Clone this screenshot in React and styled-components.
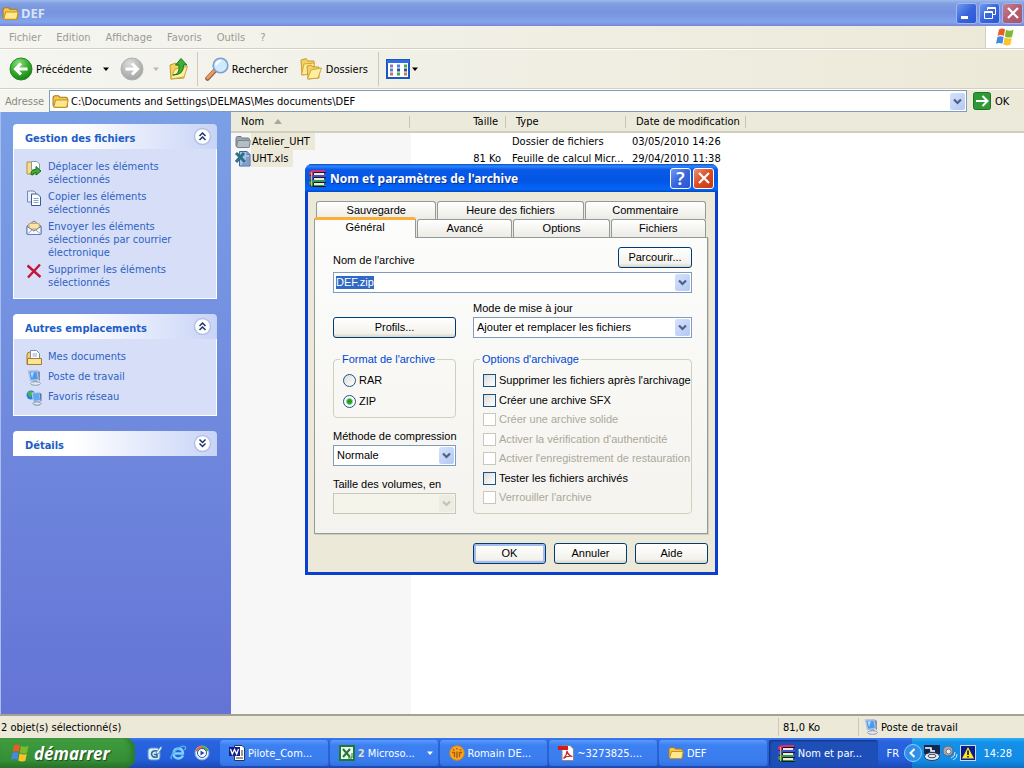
import React, { useEffect, useRef, useState } from 'react';
import styled, { createGlobalStyle, css } from 'styled-components';

const uiFont = `'DejaVu Sans Condensed', Tahoma, 'Noto Sans', sans-serif`;
const dialogFont = `'Liberation Sans', Arial, sans-serif`;
const titleFont = `'Noto Sans', 'Open Sans', sans-serif`;

const menuItems = ['Fichier', 'Edition', 'Affichage', 'Favoris', 'Outils', '?'];

const files = [
  {
    name: 'Atelier_UHT',
    size: '',
    type: 'Dossier de fichiers',
    date: '03/05/2010 14:26',
    icon: 'folder',
  },
  {
    name: 'UHT.xls',
    size: '81 Ko',
    type: 'Feuille de calcul Micr...',
    date: '29/04/2010 11:38',
    icon: 'sheet',
  },
];

const archiveOptions = [
  { label: "Supprimer les fichiers après l'archivage" },
  { label: 'Créer une archive SFX' },
  { label: 'Créer une archive solide', disabled: true },
  { label: "Activer la vérification d'authenticité", disabled: true },
  { label: "Activer l'enregistrement de restauration", disabled: true },
  { label: 'Tester les fichiers archivés' },
  { label: "Verrouiller l'archive", disabled: true },
];

/* ---------- Icons ---------- */

const FolderIcon = ({ size = 16, gray }) => (
  <svg width={size} height={size} viewBox="0 0 16 16">
    <path
      d="M1 4.5Q1 2.5 3 2.5H6L7.5 4H13Q14.5 4 14.5 5.5V13H2.5Q1 13 1 11.5Z"
      fill={gray ? '#9aa5ae' : '#f3c84b'}
      stroke={gray ? '#6d7982' : '#a8791c'}
    />
    <path
      d={
        gray
          ? 'M2.5 6.5H15.2L14.5 12.5Q14.4 13.5 13.3 13.5H3Q1.8 13.5 1.8 12.3Z'
          : 'M3.5 6.5H15.2L14 12.5Q13.8 13.5 12.8 13.5H2.5Q1.5 13.5 1.8 12.3Z'
      }
      fill={gray ? '#b4bdc3' : '#ffe88e'}
      stroke={gray ? '#78848c' : '#c4932a'}
    />
  </svg>
);

const SheetIcon = () => (
  <svg width="16" height="16" viewBox="0 0 16 16">
    <path d="M4.5 .5H12L15 3.5V15H4.5Z" fill="#a9c0e2" stroke="#3f649f" />
    <path d="M12 .5V3.5H15M11 7H14M11 9H14M11 11H14M7 13H14" fill="none" stroke="#5b7fb5" />
    <path d="M1 2L10 11M9 2L1 11" stroke="#2c7286" strokeWidth="3" />
  </svg>
);

const BackIcon = ({ disabled }) => (
  <svg width="24" height="24" viewBox="0 0 24 24">
    <defs>
      <radialGradient id={disabled ? 'navOff' : 'navOn'} cx="0.4" cy="0.25" r="0.8">
        <stop offset="0" stopColor={disabled ? '#dcdcdc' : '#8be07d'} />
        <stop offset="0.55" stopColor={disabled ? '#b9b9b9' : '#36ab2c'} />
        <stop offset="1" stopColor={disabled ? '#a2a2a2' : '#167c16'} />
      </radialGradient>
    </defs>
    <circle
      cx="12"
      cy="12"
      r="11"
      fill={`url(#${disabled ? 'navOff' : 'navOn'})`}
      stroke={disabled ? '#b0b0b0' : '#278a25'}
    />
    <path
      d={disabled ? 'M5.5 12H17M12 6.5L17.5 12L12 17.5' : 'M18.5 12H7M12 6.5L6.5 12L12 17.5'}
      fill="none"
      stroke="#fff"
      strokeWidth="3"
    />
  </svg>
);

const UpFolderIcon = () => (
  <svg width="22" height="24" viewBox="0 0 22 24">
    <path d="M2 8L8 6L10 9H16V21L3 22Z" fill="#f4d261" stroke="#c39a32" />
    <path d="M2.5 22L7 12L19.5 9.5L16 20Z" fill="#ffef9e" stroke="#d0a63c" />
    <path
      d="M5 18Q12 18 11 8H7.5L13 1.5L19 8H15.5Q16 18 5 18Z"
      fill="#3fae35"
      stroke="#1c7a1c"
    />
  </svg>
);

const SearchIcon = () => (
  <svg width="24" height="24" viewBox="0 0 24 24">
    <path d="M2.5 21.5L9.5 14" stroke="#9a5f3b" strokeWidth="4.6" strokeLinecap="round" />
    <path d="M2.5 21L9 14" stroke="#e79a68" strokeWidth="2.6" strokeLinecap="round" />
    <circle cx="15.5" cy="8.5" r="7.3" fill="#cfeafd" stroke="#7b9fd2" strokeWidth="1.6" />
    <path d="M11 8Q12 4.2 16 4" fill="none" stroke="#fff" strokeWidth="2" />
  </svg>
);

const FoldersIcon = () => (
  <svg width="24" height="24" viewBox="0 0 24 24">
    <path d="M2 3L7 1.5L9 4H15V16L3 18Z" fill="#f4d060" stroke="#c99c31" />
    <path d="M2.5 18L5 7L15.5 6L13 17Z" fill="#ffeb96" stroke="#d2a740" />
    <path d="M8 9L12 8L14 10H20V21L9 22Z" fill="#f4d060" stroke="#c99c31" />
    <path d="M8.5 22L12 13L22.5 11L19 21Z" fill="#ffef9f" stroke="#d2a740" />
  </svg>
);

const ViewsIcon = () => (
  <svg width="24" height="20" viewBox="0 0 24 20">
    <rect x="1" y="1" width="22" height="18" fill="#fff" stroke="#1c55c4" strokeWidth="2" />
    <rect x="1" y="1" width="22" height="3" fill="#2e6ee0" />
    <path d="M4 7H7" stroke="#8d7aa8" strokeWidth="3" />
    <path d="M11 7H14M4 11H7" stroke="#4b83d9" strokeWidth="3" />
    <path d="M18 7H21M11 15H14" stroke="#4da54a" strokeWidth="3" />
    <path d="M4 15H7M18 15H21" stroke="#c07a5c" strokeWidth="3" />
    <path d="M11 11H14M18 11H21" stroke="#2f4f8e" strokeWidth="3" />
  </svg>
);

const FlagIcon = ({ size = 20 }) => (
  <svg width={size} height={size} viewBox="0 0 20 20">
    <path d="M4 2.5Q7 .5 10 2.3L8.8 9Q5.8 7.2 2.6 9Z" fill="#ee5a26" />
    <path d="M11 2.8Q14.5 4.6 18.5 2.8L17 10Q13.5 11.4 9.8 9.4Z" fill="#7dbb2e" />
    <path d="M2.4 10Q5.5 8.3 8.6 10L7.4 16.8Q4.2 15 1 16.8Z" fill="#4488e4" />
    <path d="M9.6 10.5Q13 12.4 16.8 11L15.4 17.8Q12 19.4 8.3 17.4Z" fill="#fcc32c" />
  </svg>
);

const GoIcon = () => (
  <svg width="18" height="18" viewBox="0 0 18 18">
    <rect x=".5" y=".5" width="17" height="17" rx="2" fill="#2f9a35" stroke="#1d7424" />
    <path d="M3 9H14M9.5 4L14.5 9L9.5 14" fill="none" stroke="#fff" strokeWidth="2" />
  </svg>
);

const MoveIcon = () => (
  <svg width="16" height="16" viewBox="0 0 16 16">
    <path d="M1 2H6L7 3.5H12V14H1Z" fill="#f6dd86" stroke="#b5923f" />
    <path d="M5.5 1.5H11L13.5 4V10H5.5Z" fill="#fff" stroke="#8c98b8" />
    <path d="M5 14.5Q4.5 9.5 10 9.5V6.5L15 11L10 15V12.5Q7 12.2 7 15Z" fill="#3fae3a" stroke="#176f1a" />
  </svg>
);

const CopyIcon = () => (
  <svg width="16" height="16" viewBox="0 0 16 16">
    <path d="M1.5 1H8L10 3V12H1.5Z" fill="#e8effb" stroke="#7189b8" />
    <path d="M5.5 4H11.5L14.5 7V15.5H5.5Z" fill="#fff" stroke="#3c5a92" />
    <path d="M7.5 8.5H12.5M7.5 10.5H12.5M7.5 12.5H12.5" stroke="#7fa3d6" />
  </svg>
);

const MailIcon = () => (
  <svg width="16" height="16" viewBox="0 0 16 16">
    <path d="M1 6L8 1L15 6V14H1Z" fill="#bcd3f2" stroke="#6a7fa8" />
    <path d="M3 3.5H13V9H3Z" fill="#ffe3a6" stroke="#d9a652" />
    <path d="M1 6.5L8 11L15 6.5V14.5H1Z" fill="#f5f9ff" stroke="#6a7fa8" />
    <path d="M1 14.5L6 10M15 14.5L10 10" stroke="#8da3c9" />
  </svg>
);

const DeleteIcon = () => (
  <svg width="16" height="16" viewBox="0 0 16 16">
    <path d="M1.5 2.5L14.5 14M14 1.5L2 14.5" stroke="#c4143a" strokeWidth="2.4" />
  </svg>
);

const DocumentsIcon = () => (
  <svg width="16" height="16" viewBox="0 0 16 16">
    <path d="M1 5Q1 2 4 2H6V14.5H1Z" fill="#f2cf6a" stroke="#a87d27" />
    <path d="M4.5 .5H10.5L13.5 3.5V11H4.5Z" fill="#fff" stroke="#7b8fb5" />
    <path d="M6.5 4H11M6.5 6H11" stroke="#8fa9d6" />
    <path d="M1.500 8.500H15.500V14.500H1.500Z" fill="#fbe594" stroke="#a87d27" />
  </svg>
);

const ComputerIcon = () => (
  <svg width="16" height="16" viewBox="0 0 16 16">
    <path d="M2.500 1L11 .7L12.500 9.500L4.500 10.500Z" fill="#4a9bf0" stroke="#b3c2dc" strokeWidth="1.400" />
    <path d="M4.500 2.500L8 2.300L6 8Z" fill="#b5dcff" />
    <path d="M11.500 .5L14 2V11L12.800 10Z" fill="#7d90b8" />
    <path d="M7 10.500L11 10L11.500 13H8Z" fill="#9dabc6" />
    <ellipse cx="9.500" cy="13.500" rx="5" ry="1.800" fill="#e6e9f0" stroke="#8c99b5" />
  </svg>
);

const NetworkIcon = () => (
  <svg width="16" height="16" viewBox="0 0 16 16">
    <circle cx="5" cy="5" r="4.5" fill="#2f7fd8" />
    <path d="M2 2Q5 0 7 3Q5 4 5 7Q2 7 2 2Z" fill="#4cb748" />
    <path d="M6 3L13.500 2.500L14.500 10.500L7.500 11.500Z" fill="#5ca9f5" stroke="#c2cfe3" />
    <path d="M13.500 2.500L15.500 4V11.500L14.500 11Z" fill="#5a6f9b" />
    <ellipse cx="11" cy="13.500" rx="4" ry="1.700" fill="#e6e9f0" stroke="#7c8baa" />
  </svg>
);

// pile of three books
const ArchiveIcon = () => (
  <svg width="17" height="17" viewBox="0 0 17 17">
    {[
      ['#d0307f', 0],
      ['#3f55c9', 5],
      ['#2c9c57', 10],
    ].map(([color, y]) => (
      <g key={color} transform={`translate(0 ${y})`}>
        <path d="M1 1L4 0H16V2L5 3Z" fill={color} />
        <path d="M0 2L1 1L5 3V7L0 5Z" fill={color} />
        <path d="M5 2H17V3H5Z" fill="#20131c" />
        <path d="M5 3H15V5H5Z" fill="#efe9dc" />
        <path d="M5 5H17V6H5Z" fill={color} />
        <path d="M4.5 2.500V6.500L.5 5" fill="none" stroke="#20131c" strokeWidth=".8" />
      </g>
    ))}
    <path d="M2.500 2V16" stroke="#d9b94a" />
    <path d="M4 16.500H17" stroke="#20131c" />
  </svg>
);

const Chevron = ({ color = '#4d6185' }) => (
  <svg width="9" height="7" viewBox="0 0 9 7">
    <path d="M1 1.5L4.5 5L8 1.5" fill="none" stroke={color} strokeWidth="2.2" />
  </svg>
);

const DoubleChevron = ({ down }) => (
  <svg width="19" height="19" viewBox="0 0 19 19">
    <circle cx="9.5" cy="9.5" r="8" fill="#fff" stroke="#b3bfe4" strokeWidth="1.4" />
    <path
      d={
        down
          ? 'M6.5 5.5L9.5 8.5L12.5 5.5M6.5 9.5L9.5 12.5L12.5 9.5'
          : 'M6.5 9L9.5 6L12.5 9M6.5 13L9.5 10L12.5 13'
      }
      fill="none"
      stroke="#1d3470"
      strokeWidth="1.5"
    />
  </svg>
);

const SmallArrow = ({ color = '#000', up }) => (
  <svg width="8" height="5" viewBox="0 0 8 5">
    <path d={up ? 'M0 5L4 0L8 5Z' : 'M1 0.5H7L4 4Z'} fill={color} />
  </svg>
);

const QuickDesktopIcon = () => (
  <svg width="16" height="16" viewBox="0 0 16 16">
    <rect x="1" y="3" width="12" height="12" rx="3" fill="#d8ecfa" stroke="#5f92c8" />
    <path d="M10 6Q5 5 4.5 9Q5 13 10 12V9.5H7" fill="none" stroke="#256b9c" strokeWidth="1.6" />
    <path d="M9 8L14 1L15 3L11 9Z" fill="#fff" stroke="#3f77b4" strokeWidth=".8" />
  </svg>
);

const BrowserIcon = () => (
  <svg width="17" height="16" viewBox="0 0 17 16">
    <path d="M13 10.5Q11.5 13.5 8 13.5Q3.5 13 3.5 8.5Q4 3.5 8.5 3.5Q13 4 13 8.5H5" fill="none" stroke="#7fd0fb" strokeWidth="2.4" />
    <path d="M2 14Q-1 13 5 6Q12 0 15 1.5Q16.5 2.5 14.5 5" fill="none" stroke="#56b4ee" strokeWidth="1.3" />
  </svg>
);

const PlayerIcon = () => (
  <svg width="16" height="16" viewBox="0 0 16 16">
    <circle cx="8" cy="8" r="7" fill="#e9f1fb" stroke="#87a6d8" />
    <path d="M1.5 6Q3 1 8 1V4.5Q5 4.5 4.5 7Z" fill="#e8702e" />
    <path d="M8 1Q13 1.5 14.5 6L11 7Q10 4.5 8 4.5Z" fill="#58a83d" />
    <circle cx="8" cy="8" r="4.5" fill="#fff" stroke="#2a52a8" />
    <path d="M6.5 5.5L10.5 8L6.5 10.5Z" fill="#1f4cae" />
  </svg>
);

const WordIcon = () => (
  <svg width="16" height="16" viewBox="0 0 16 16">
    <path d="M5.5 .5H13L15.5 3V15.5H5.5Z" fill="#fff" stroke="#26345e" />
    <path d="M12 6H14M12 8H14M12 10H14M7 13H14" stroke="#333" />
    <rect x="0" y="2" width="11" height="9" fill="#14208c" />
    <path d="M1.5 4L3.3 9L5.5 4.5L7.7 9L9.5 4" fill="none" stroke="#fff" strokeWidth="1.3" />
  </svg>
);

const ExcelIcon = () => (
  <svg width="16" height="16" viewBox="0 0 16 16">
    <rect x="1" y="1" width="14" height="14" fill="#f1f7ee" stroke="#1d7a35" strokeWidth="2" />
    <path d="M4 4L11 12M11 4L4 12" stroke="#1d7a35" strokeWidth="2" />
    <path d="M13 8V13M9 13H13" stroke="#1d7a35" />
  </svg>
);

const ContactIcon = () => (
  <svg width="16" height="16" viewBox="0 0 16 16">
    <circle cx="8" cy="8" r="7.3" fill="#f9a526" stroke="#d9820f" />
    <path d="M4.5 4V5.500M8 3V4.500M11.500 4V5.500" stroke="#a85a08" strokeWidth="1.400" />
    <path d="M3 7.500H5.500V12M8 6.500V13M13 7.500H10.500V12" fill="none" stroke="#a85a08" strokeWidth="1.400" />
  </svg>
);

const PdfIcon = () => (
  <svg width="16" height="16" viewBox="0 0 16 16">
    <path d="M4 .5H12L15.5 4V15.5H4Z" fill="#fff" stroke="#8a8a8a" />
    <rect x="0" y="1" width="10" height="4" fill="#d01c1c" />
    <path d="M5.5 13.5Q9 10 9 6Q10 10.5 14.5 11.5Q9 10.5 5.5 13.5Z" fill="none" stroke="#c9252a" strokeWidth="1.2" />
  </svg>
);

const TrayDeviceIcon = () => (
  <svg width="16" height="16" viewBox="0 0 16 16">
    <rect width="16" height="9" fill="#10264f" />
    <path d="M1 3H7V6H11" fill="none" stroke="#fff" strokeWidth="1.6" />
    <ellipse cx="8" cy="11.5" rx="7.5" ry="4" fill="#e6eaf0" stroke="#2b3b5c" />
    <ellipse cx="8" cy="11" rx="4" ry="1.8" fill="none" stroke="#3d4b66" />
  </svg>
);

const SpeakerIcon = () => (
  <svg width="16" height="16" viewBox="0 0 16 16">
    <circle cx="6" cy="6" r="5" fill="#a7acb4" stroke="#5f666f" />
    <circle cx="6.5" cy="6.5" r="2.5" fill="#e8ebef" stroke="#6d7580" />
    <path d="M9 13Q13 12 13 7M11 15Q15.5 13 15 9" fill="none" stroke="#d7e3f0" />
  </svg>
);

const WarningIcon = () => (
  <svg width="16" height="16" viewBox="0 0 16 16">
    <rect x=".5" y=".5" width="15" height="15" fill="#0b1c8e" stroke="#cfd8f2" />
    <path d="M8 2L14 13.5H2Z" fill="#ffe81f" />
    <path d="M8 5.5V10M8 11V12.6" stroke="#111" strokeWidth="1.6" />
  </svg>
);

const CloseCross = () => (
  <svg width="20" height="20" viewBox="0 0 20 20">
    <path d="M5 5L15 15M15 5L5 15" stroke="#fff" strokeWidth="2.2" />
  </svg>
);

const tasks = [
  { label: 'Pilote_Com...', icon: <WordIcon /> },
  { label: 'Microso...', icon: <ExcelIcon />, count: 2 },
  { label: 'Romain DE...', icon: <ContactIcon /> },
  { label: '~3273825....', icon: <PdfIcon /> },
  { label: 'DEF', icon: <FolderIcon /> },
  { label: 'Nom et par...', icon: <ArchiveIcon />, active: true },
];

const sidePanels = [
  {
    title: 'Gestion des fichiers',
    links: [
      { label: 'Déplacer les éléments sélectionnés', icon: <MoveIcon /> },
      { label: 'Copier les éléments sélectionnés', icon: <CopyIcon /> },
      {
        label: 'Envoyer les éléments sélectionnés par courrier électronique',
        icon: <MailIcon />,
      },
      { label: 'Supprimer les éléments sélectionnés', icon: <DeleteIcon /> },
    ],
  },
  {
    title: 'Autres emplacements',
    links: [
      { label: 'Mes documents', icon: <DocumentsIcon /> },
      { label: 'Poste de travail', icon: <ComputerIcon /> },
      { label: 'Favoris réseau', icon: <NetworkIcon /> },
    ],
  },
  { title: 'Détails', links: null },
];

/* ---------- Explorer window ---------- */

const Explorer = () => (
  <ExplorerWindow>
    <TitleBar>
      <FolderIcon size={17} />
      <WindowTitle>DEF</WindowTitle>
      <CaptionButton aria-label="Réduire">
        <svg width="20" height="20" viewBox="0 0 20 20">
          <path d="M4 14.5H11" stroke="#fff" strokeWidth="3" />
        </svg>
      </CaptionButton>
      <CaptionButton aria-label="Restaurer">
        <svg width="20" height="20" viewBox="0 0 20 20">
          <path d="M7.5 7V4.5H15.5V11.5H13M7.5 5.5H15.5" fill="none" stroke="#fff" />
          <path d="M4.5 8.5H12.5V15.5H4.5ZM4.5 9.5H12.5" fill="none" stroke="#fff" />
        </svg>
      </CaptionButton>
      <CaptionButton aria-label="Fermer" $close>
        <CloseCross />
      </CaptionButton>
    </TitleBar>

    <MenuBar>
      {menuItems.map((item) => (
        <MenuButton key={item}>{item}</MenuButton>
      ))}
      <FlagBox>
        <FlagIcon />
      </FlagBox>
    </MenuBar>

    <ToolBar>
      <ToolButton>
        <BackIcon />
        Précédente
      </ToolButton>
      <ArrowButton aria-label="Historique précédent">
        <SmallArrow />
      </ArrowButton>
      <ToolButton aria-label="Suivante" disabled>
        <BackIcon disabled />
      </ToolButton>
      <ArrowButton aria-label="Historique suivant" disabled>
        <SmallArrow color="#b9b9ae" />
      </ArrowButton>
      <ToolButton aria-label="Dossier parent">
        <UpFolderIcon />
      </ToolButton>
      <ToolDivider />
      <ToolButton>
        <SearchIcon />
        Rechercher
      </ToolButton>
      <ToolButton $wide>
        <FoldersIcon />
        Dossiers
      </ToolButton>
      <ToolDivider />
      <ToolButton aria-label="Affichages" $tight>
        <ViewsIcon />
        <SmallArrow />
      </ToolButton>
    </ToolBar>

    <AddressBar>
      <AddressLabel htmlFor="address">Adresse</AddressLabel>
      <AddressField>
        <FolderIcon size={17} />
        <AddressInput
          id="address"
          defaultValue="C:\Documents and Settings\DELMAS\Mes documents\DEF"
        />
        <DropButton aria-label="Adresses récentes">
          <Chevron />
        </DropButton>
      </AddressField>
      <GoButton>
        <GoIcon />
        OK
      </GoButton>
    </AddressBar>

    <ExplorerBody>
      <Sidebar>
        {sidePanels.map((panel) => (
          <section key={panel.title}>
            <PanelHeader>
              <PanelTitle>{panel.title}</PanelTitle>
              <PanelToggle aria-label={panel.title}>
                <DoubleChevron down={!panel.links} />
              </PanelToggle>
            </PanelHeader>
            {panel.links && (
              <PanelBody>
                {panel.links.map((link) => (
                  <PanelLink key={link.label} href="#">
                    {link.icon}
                    <span>{link.label}</span>
                  </PanelLink>
                ))}
              </PanelBody>
            )}
          </section>
        ))}
      </Sidebar>

      <FileArea>
        <FileTable>
          <colgroup>
            <col width="179" />
            <col width="96" />
            <col width="120" />
            <col width="120" />
            <col />
          </colgroup>
          <thead>
            <tr>
              <HeadCell>
                <SortLabel>
                  Nom <SmallArrow up color="#aca899" />
                </SortLabel>
              </HeadCell>
              <HeadCell $right>Taille</HeadCell>
              <HeadCell>Type</HeadCell>
              <HeadCell>Date de modification</HeadCell>
              <HeadCell $last />
            </tr>
          </thead>
          <tbody>
            {files.map((file) => (
              <tr key={file.name}>
                <FileCell $first>
                  <FileName>
                    {file.icon === 'folder' ? <FolderIcon gray /> : <SheetIcon />}
                    <span>{file.name}</span>
                  </FileName>
                </FileCell>
                <FileCell $right>{file.size}</FileCell>
                <FileCell>{file.type}</FileCell>
                <FileCell>{file.date}</FileCell>
                <td />
              </tr>
            ))}
          </tbody>
        </FileTable>
      </FileArea>
    </ExplorerBody>

    <StatusBar>
      <StatusText>2 objet(s) sélectionné(s)</StatusText>
      <StatusCell $width="80px">81,0 Ko</StatusCell>
      <StatusCell $width="166px">
        <ComputerIcon />
        Poste de travail
      </StatusCell>
    </StatusBar>
  </ExplorerWindow>
);

/* ---------- Archive dialog ---------- */

const ArchiveDialog = () => {
  const nameRef = useRef(null);
  const [format, setFormat] = useState('ZIP');

  useEffect(() => {
    nameRef.current.focus();
    nameRef.current.select();
  }, []);

  return (
    <DialogWindow role="dialog" aria-labelledby="dialogTitle">
      <DialogTitleBar>
        <ArchiveIcon />
        <DialogTitle id="dialogTitle">Nom et paramètres de l'archive</DialogTitle>
        <CaptionButton aria-label="Aide contextuelle" $bright>
          ?
        </CaptionButton>
        <CaptionButton aria-label="Fermer" $bright $close>
          <CloseCross />
        </CaptionButton>
      </DialogTitleBar>

      <DialogBody>
        <TabList role="tablist">
          <TabRow>
            <Tab role="tab" $grow={120}>Sauvegarde</Tab>
            <Tab role="tab" $grow={146}>Heure des fichiers</Tab>
            <Tab role="tab" $grow={121}>Commentaire</Tab>
          </TabRow>
          <TabRow>
            <Tab role="tab" aria-selected="true" $grow={102} $active>Général</Tab>
            <Tab role="tab" $grow={95}>Avancé</Tab>
            <Tab role="tab" $grow={96}>Options</Tab>
            <Tab role="tab" $grow={95}>Fichiers</Tab>
          </TabRow>
        </TabList>

        <TabPanel role="tabpanel">
          <NameRow>
            <label htmlFor="archiveName">Nom de l'archive</label>
            <PushButton $width="74px">Parcourir...</PushButton>
          </NameRow>
          <ComboBox>
            <ComboInput id="archiveName" ref={nameRef} defaultValue="DEF.zip" />
            <DropButton aria-label="Noms récents">
              <Chevron />
            </DropButton>
          </ComboBox>

          <SettingsGrid>
            <ProfileCell>
              <PushButton $width="100%">Profils...</PushButton>
            </ProfileCell>
            <Field>
              <label htmlFor="updateMode">Mode de mise à jour</label>
              <SelectBox>
                <Select id="updateMode">
                  <option>Ajouter et remplacer les fichiers</option>
                </Select>
                <SelectArrow>
                  <Chevron />
                </SelectArrow>
              </SelectBox>
            </Field>

            <LeftColumn>
              <Group>
                <legend>Format de l'archive</legend>
                <RadioList>
                  {['RAR', 'ZIP'].map((value) => (
                    <OptionLabel key={value}>
                      <Radio
                        type="radio"
                        name="format"
                        checked={format === value}
                        onChange={() => setFormat(value)}
                      />
                      {value}
                    </OptionLabel>
                  ))}
                </RadioList>
              </Group>
              <Field>
                <label htmlFor="method">Méthode de compression</label>
                <SelectBox>
                  <Select id="method">
                    <option>Normale</option>
                  </Select>
                  <SelectArrow>
                    <Chevron />
                  </SelectArrow>
                </SelectBox>
              </Field>
              <Field>
                <label htmlFor="volumes">Taille des volumes, en</label>
                <SelectBox>
                  <Select id="volumes" disabled />
                  <SelectArrow $disabled>
                    <Chevron color="#c5c3b8" />
                  </SelectArrow>
                </SelectBox>
              </Field>
            </LeftColumn>

            <Group>
              <legend>Options d'archivage</legend>
              <CheckList>
                {archiveOptions.map(({ label, disabled }) => (
                  <OptionLabel key={label} $disabled={disabled}>
                    <Checkbox type="checkbox" disabled={disabled} />
                    {label}
                  </OptionLabel>
                ))}
              </CheckList>
            </Group>
          </SettingsGrid>
        </TabPanel>

        <DialogActions>
          <PushButton $width="73px" $default>OK</PushButton>
          <PushButton $width="73px">Annuler</PushButton>
          <PushButton $width="73px">Aide</PushButton>
        </DialogActions>
      </DialogBody>
    </DialogWindow>
  );
};

/* ---------- Taskbar ---------- */

const TaskBar = () => (
  <Bar>
    <StartButton>
      <FlagIcon size={20} />
      démarrer
    </StartButton>
    <QuickLaunch>
      <QuickButton aria-label="Bureau"><QuickDesktopIcon /></QuickButton>
      <QuickButton aria-label="Navigateur"><BrowserIcon /></QuickButton>
      <QuickButton aria-label="Lecteur"><PlayerIcon /></QuickButton>
    </QuickLaunch>
    <TaskList>
      {tasks.map((task) => (
        <TaskButton key={task.label} $active={task.active}>
          {task.icon}
          {task.count && <b>{task.count}</b>}
          <span>{task.label}</span>
          {task.count && <SmallArrow color="#fff" />}
        </TaskButton>
      ))}
    </TaskList>
    <Language>FR</Language>
    <Tray>
      <TrayToggle aria-label="Masquer">
        <svg width="18" height="18" viewBox="0 0 18 18">
          <circle cx="9" cy="9" r="8.5" fill="#2f8fe8" stroke="#8fcdf8" />
          <path d="M10.5 5L6.5 9L10.5 13" fill="none" stroke="#fff" strokeWidth="2" />
        </svg>
      </TrayToggle>
      <TrayDeviceIcon />
      <SpeakerIcon />
      <WarningIcon />
      <Clock>14:28</Clock>
    </Tray>
  </Bar>
);

const App = () => (
  <>
    <GlobalStyle />
    <Desktop>
      <Explorer />
      <TaskBar />
      <ArchiveDialog />
    </Desktop>
  </>
);

const GlobalStyle = createGlobalStyle`
  * {
    box-sizing: border-box;
  }

  body {
    margin: 0;
    font-family: ${uiFont};
    font-size: 11px;
    line-height: 13px;
    color: #000;
  }

  button, input, select {
    margin: 0;
    padding: 0;
    border: none;
    background: none;
    font: inherit;
    color: inherit;
    outline: none;
  }

  svg {
    display: block;
    flex: none;
  }
`;

const Desktop = styled.div`
  position: relative;
  height: 100vh;
  display: flex;
  flex-direction: column;
  overflow: hidden;
`;

const ExplorerWindow = styled.main`
  flex: 1;
  min-height: 0;
  display: flex;
  flex-direction: column;
  background: #ece9d8;
`;

const TitleBar = styled.header`
  display: flex;
  align-items: center;
  gap: 2px;
  height: 26px;
  padding: 0 1px 0 2px;
  background: linear-gradient(#9db9eb 0, #7f9de0 15%, #7893df 50%, #81a5ea 85%, #7f95e2 92%, #7485dc 100%);
`;

const WindowTitle = styled.h1`
  flex: 1;
  margin: 0;
  font-family: ${titleFont};
  font-size: 13px;
  font-weight: 700;
  color: #d8e4f8;
`;

const CaptionButton = styled.button`
  display: flex;
  align-items: center;
  justify-content: center;
  width: 21px;
  height: 21px;
  border: 1px solid ${(props) => (props.$bright ? '#fff' : '#9fb6ee')};
  border-radius: 3px;
  background: ${(props) => {
    if (props.$close && props.$bright) return 'linear-gradient(135deg, #ec9076, #dd4a23 50%, #c43a12)';
    if (props.$close) return 'linear-gradient(135deg, #c58092, #b25e74 50%, #a8566a)';
    return 'linear-gradient(135deg, #6f9af2, #3a66dc 50%, #2a56d4)';
  }};
  color: #fff;
  font-family: ${titleFont};
  font-size: 18px;
  font-weight: 600;
`;

const MenuBar = styled.nav`
  display: flex;
  align-items: center;
  gap: 15px;
  height: 23px;
  padding-left: 9px;
  border-bottom: 1px solid #d3d0c0;
  background: linear-gradient(90deg, #f5f5f1, #ece9d8);
`;

const MenuButton = styled.button`
  color: #9d9a90;
`;

const FlagBox = styled.div`
  display: flex;
  align-items: center;
  justify-content: center;
  align-self: stretch;
  width: 39px;
  margin-left: auto;
  border-left: 1px solid #d3d0c0;
  background: #fff;
`;

const ToolBar = styled.div`
  display: flex;
  align-items: center;
  height: 40px;
  padding-left: 9px;
  border-top: 1px solid #fff;
  border-bottom: 1px solid #d3d0c0;
  background: linear-gradient(90deg, #f5f5f1, #ece9d8);
`;

const ToolButton = styled.button`
  display: flex;
  align-items: center;
  gap: ${(props) => (props.$tight ? '1px' : '3px')};
  margin-left: ${(props) => (props.$wide ? '11px' : '0')};
`;

const ArrowButton = styled.button`
  display: flex;
  justify-content: center;
  width: 28px;

  &:disabled {
    width: 24px;
  }
`;

const ToolDivider = styled.span`
  width: 1px;
  height: 34px;
  margin: 0 7px;
  background: #cdcaba;

  &:last-of-type {
    margin-left: 10px;
  }
`;

const AddressBar = styled.div`
  display: flex;
  align-items: center;
  height: 23px;
  padding-left: 5px;
  border-top: 1px solid #fff;
  background: linear-gradient(90deg, #f5f5f1, #ece9d8);
`;

const AddressLabel = styled.label`
  width: 44px;
  color: #8c897d;
`;

const AddressField = styled.div`
  flex: 1;
  display: flex;
  align-items: center;
  gap: 2px;
  height: 22px;
  padding: 1px 1px 1px 2px;
  border: 1px solid #7f9db9;
  background: #fff;
`;

const AddressInput = styled.input`
  flex: 1;
  min-width: 0;
`;

const DropButton = styled.button`
  flex: none;
  display: flex;
  align-items: center;
  justify-content: center;
  width: 15px;
  height: 17px;
  border-radius: 2px;
  background: linear-gradient(135deg, #d6e2fc, #b4c8f4);
`;

const GoButton = styled.button`
  display: flex;
  align-items: center;
  gap: 4px;
  width: 57px;
  padding-left: 6px;
`;

const ExplorerBody = styled.div`
  flex: 1;
  min-height: 0;
  display: flex;
`;

const Sidebar = styled.aside`
  flex: none;
  display: flex;
  flex-direction: column;
  gap: 15px;
  width: 231px;
  padding: 12px 14px 12px 12px;
  border-left: 1px solid #a9bdf0;
  background: linear-gradient(#7ba0e6, #6474d6);
`;

const PanelHeader = styled.div`
  display: flex;
  align-items: center;
  justify-content: space-between;
  height: 25px;
  padding: 0 5px 0 12px;
  border-radius: 4px 4px 0 0;
  background: linear-gradient(90deg, #fff 30%, #c8d4f7);
`;

const PanelTitle = styled.h2`
  margin: 0;
  padding-top: 3px;
  font-size: 11px;
  font-weight: 700;
  color: #215dc6;
`;

const PanelToggle = styled.button``;

const PanelBody = styled.div`
  display: flex;
  flex-direction: column;
  gap: 4px;
  padding: 11px 12px 9px;
  border: 1px solid #fff;
  border-top: none;
  background: #d6dff7;
`;

const PanelLink = styled.a`
  display: flex;
  align-items: flex-start;
  gap: 6px;
  min-height: 16px;
  color: #2f62c4;
  text-decoration: none;
`;

const FileArea = styled.div`
  flex: 1;
  min-width: 0;
  background: linear-gradient(90deg, #f7f7f7 180px, #fff 180px);
`;

const FileTable = styled.table`
  width: 100%;
  table-layout: fixed;
  border-collapse: collapse;
`;

const HeadCell = styled.th`
  height: 20px;
  padding: 0 ${(props) => (props.$right ? '8px' : '0')} 0 ${(props) => (props.$right ? '0' : '10px')};
  border-bottom: 2px solid #d2cebd;
  background: ${(props) =>
    props.$last
      ? '#ebeadb'
      : 'linear-gradient(#c7c5b2, #c7c5b2) right center / 1px 12px no-repeat #ebeadb'};
  font-weight: 400;
  text-align: ${(props) => (props.$right ? 'right' : 'left')};
`;

const SortLabel = styled.span`
  display: flex;
  align-items: center;
  gap: 10px;
`;

const FileCell = styled.td`
  height: 17px;
  padding: 0 ${(props) => (props.$right ? '5px' : '0')} 0
    ${(props) => (props.$first ? '4px' : '6px')};
  text-align: ${(props) => (props.$right ? 'right' : 'left')};
  white-space: nowrap;
`;

const FileName = styled.span`
  display: flex;
  align-items: center;

  span {
    padding: 2px 5px 2px 1px;
    background: #ece9d8;
  }
`;

const StatusBar = styled.footer`
  display: flex;
  align-items: center;
  height: 24px;
  border-top: 2px solid #a5a293;
  background: #ece9d8;
`;

const StatusText = styled.span`
  flex: 1;
  padding-left: 1px;
`;

const StatusCell = styled.span`
  display: flex;
  align-items: center;
  gap: 2px;
  width: ${(props) => props.$width};
  height: 18px;
  padding-left: 4px;
  border-left: 1px solid #cbc8b8;
`;

const DialogWindow = styled.div`
  position: absolute;
  top: 164px;
  left: 305px;
  width: 413px;
  padding: 0 3px 3px;
  border-radius: 7px 7px 0 0;
  background: #0a3fd2;
  font-family: ${dialogFont};
`;

const DialogTitleBar = styled.div`
  display: flex;
  align-items: center;
  gap: 2px;
  height: 28px;
  margin: 0 -3px;
  padding: 0 4px;
  border-radius: 7px 7px 0 0;
  background: linear-gradient(#0a50c8 0, #2f86fb 8%, #0a5ae8 20%, #0355e4 60%, #0466fb 90%, #0347c4 100%);
`;

const DialogTitle = styled.h2`
  flex: 1;
  margin: 0;
  padding-left: 2px;
  font-family: ${titleFont};
  font-size: 12px;
  font-weight: 700;
  color: #fff;
  text-shadow: 1px 1px #0b318c;
`;

const DialogBody = styled.div`
  padding: 9px 7px 8px 6px;
  background: #ece9d8;
`;

const TabList = styled.div`
  padding: 0 2px 0 0;
`;

const TabRow = styled.div`
  display: flex;
  align-items: flex-end;
  gap: 1px;
  height: 18px;
  padding-left: 2px;

  &:last-child {
    padding-left: 0;
  }
`;

const Tab = styled.button`
  flex: ${(props) => props.$grow} 1 0;
  height: 18px;
  border: 1px solid #919b9c;
  border-bottom: none;
  border-radius: 3px 3px 0 0;
  background: linear-gradient(#fff, #ecebe5);

  ${(props) =>
    props.$active &&
    css`
      z-index: 1;
      height: 21px;
      margin-bottom: -1px;
      padding-bottom: 3px;
      border-top: 3px solid #fbae3a;
      background: #fcfcfb;
    `}
`;

const TabPanel = styled.div`
  padding: 9px 15px 19px 18px;
  border: 1px solid #919b9c;
  box-shadow: 1px 1px #d0cebf;
  background: linear-gradient(#fcfcfb, #f4f3ee);
`;

const NameRow = styled.div`
  display: flex;
  align-items: center;
  justify-content: space-between;

  label {
    padding-top: 6px;
  }
`;

const PushButton = styled.button`
  width: ${(props) => props.$width};
  height: 21px;
  border: 1px solid #003c74;
  border-radius: 3px;
  background: linear-gradient(#fff, #f3f2ec 80%, #d9d4c6);
  ${(props) =>
    props.$default &&
    css`
      box-shadow: inset 0 0 0 2px #a3bdee;
    `}
`;

const ComboBox = styled.div`
  display: flex;
  align-items: center;
  height: 21px;
  margin-top: 4px;
  padding: 1px 1px 1px 2px;
  border: 1px solid #7f9db9;
  background: #fff;
`;

const ComboInput = styled.input`
  flex: 1;
  min-width: 0;
  font-size: 11px;

  &::selection {
    background: #316ac5;
    color: #fff;
  }
`;

const SettingsGrid = styled.div`
  display: grid;
  grid-template-columns: 123px 1fr;
  column-gap: 17px;
  row-gap: 15px;
  margin-top: 9px;
`;

const ProfileCell = styled.div`
  display: flex;
  align-items: flex-end;
`;

const Field = styled.div`
  display: flex;
  flex-direction: column;
  gap: 2px;
  white-space: nowrap;
`;

const SelectBox = styled.div`
  position: relative;
`;

const Select = styled.select`
  display: block;
  appearance: none;
  width: 100%;
  height: 21px;
  padding: 0 18px 0 3px;
  border: 1px solid #7f9db9;
  background: #fff;

  &:disabled {
    border-color: #c9c7ba;
    background: #f5f4ea;
    opacity: 1;
  }
`;

const SelectArrow = styled.span`
  position: absolute;
  top: 2px;
  right: 2px;
  display: flex;
  align-items: center;
  justify-content: center;
  width: 15px;
  height: 17px;
  border-radius: 2px;
  background: ${(props) =>
    props.$disabled ? '#edece2' : 'linear-gradient(135deg, #d6e2fc, #b4c8f4)'};
  pointer-events: none;
`;

const LeftColumn = styled.div`
  display: flex;
  flex-direction: column;
  gap: 12px;
`;

const Group = styled.fieldset`
  display: flex;
  flex-direction: column;
  min-width: 0;
  margin: 0;
  padding: 0 4px 0 9px;
  border: 1px solid #d0d0bf;
  border-radius: 4px;

  legend {
    margin-left: -3px;
    padding: 0 2px;
    color: #0046d5;
  }
`;

const RadioList = styled.div`
  display: flex;
  flex-direction: column;
  gap: 6px;
  padding: 7px 0 8px;
`;

const CheckList = styled.div`
  flex: 1;
  display: flex;
  flex-direction: column;
  justify-content: space-between;
  padding: 7px 0 8px;
`;

const OptionLabel = styled.label`
  display: flex;
  align-items: center;
  gap: 3px;
  height: 15px;
  white-space: nowrap;
  color: ${(props) => (props.$disabled ? '#aca899' : '#000')};
`;

const Radio = styled.input`
  appearance: none;
  flex: none;
  width: 13px;
  height: 13px;
  border: 1px solid #1f5288;
  border-radius: 50%;
  background: linear-gradient(135deg, #dcdcd7, #fff);

  &:checked {
    background: radial-gradient(circle, #21a121 0 2px, #fff 4px);
  }
`;

const Checkbox = styled.input`
  appearance: none;
  flex: none;
  width: 13px;
  height: 13px;
  border: 1px solid #1d5281;
  background: linear-gradient(135deg, #dcdcd7, #fff);

  &:disabled {
    border-color: #cac8bb;
    background: #fff;
  }
`;

const DialogActions = styled.div`
  display: flex;
  justify-content: flex-end;
  gap: 8px;
  margin-top: 9px;
`;

const Bar = styled.footer`
  display: flex;
  align-items: stretch;
  height: 30px;
  background: linear-gradient(#3a7af0 0, #2a63de 12%, #245edb 70%, #1b48b4 100%);
  color: #fff;
`;

const StartButton = styled.button`
  display: flex;
  align-items: center;
  gap: 4px;
  width: 135px;
  padding-left: 10px;
  border-radius: 0 10px 10px 0;
  background: linear-gradient(#55ab55 0, #3d9a3d 15%, #358f35 75%, #27702a 100%);
  box-shadow: inset -4px 0 5px #2b7a2d;
  color: #fff;
  font-family: ${titleFont};
  font-size: 17px;
  font-style: italic;
  font-weight: 700;
  text-shadow: 1px 1px 1px #1d4a1d;
`;

const QuickLaunch = styled.div`
  display: flex;
  align-items: center;
  gap: 7px;
  width: 85px;
  padding-left: 12px;
`;

const QuickButton = styled.button``;

const TaskList = styled.div`
  flex: 1;
  min-width: 0;
  display: flex;
  align-items: center;
  gap: 1px;
`;

const TaskButton = styled.button`
  flex: 1;
  min-width: 0;
  display: flex;
  align-items: center;
  gap: 3px;
  height: 26px;
  padding: 0 5px 0 9px;
  border-radius: 3px;
  background: ${(props) =>
    props.$active ? '#1e4fb8' : 'linear-gradient(#5a9bff, #3c80f2 20%, #3a7cee 80%, #3270dc)'};
  box-shadow: ${(props) => (props.$active ? 'inset 1px 1px 2px #12337c' : 'inset -1px 0 #2c63cc')};
  white-space: nowrap;

  b {
    color: #e6dcc0;
  }

  span {
    flex: 1;
    text-align: left;
  }
`;

const Language = styled.span`
  align-self: center;
  width: 35px;
  padding-left: 9px;
`;

const Tray = styled.div`
  display: flex;
  align-items: center;
  gap: 2px;
  background: linear-gradient(#2fb0f5 0, #1490e8 15%, #128be4 75%, #0d6fc4 100%);
`;

const TrayToggle = styled.button`
  margin-left: -8px;
`;

const Clock = styled.time`
  padding: 0 12px 0 5px;
`;

export default App;
